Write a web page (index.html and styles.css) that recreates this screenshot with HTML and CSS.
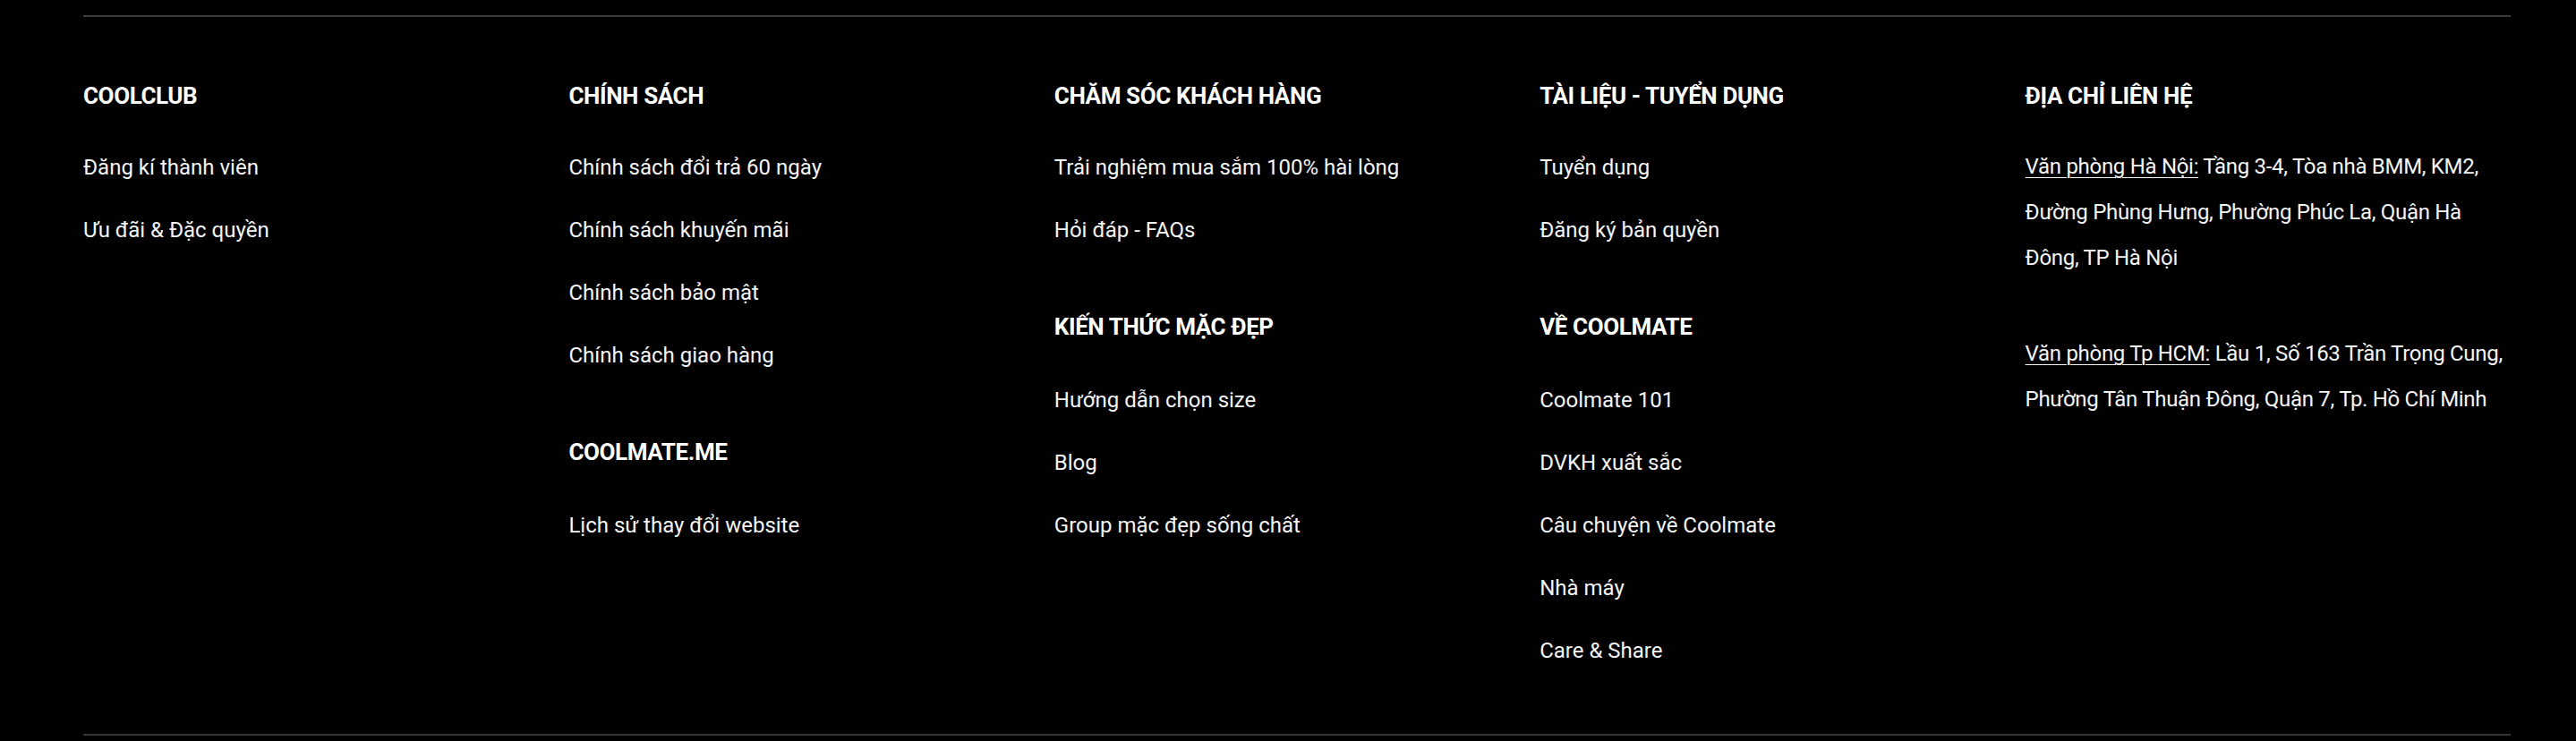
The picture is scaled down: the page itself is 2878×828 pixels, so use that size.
FILE: index.html
```html
<!DOCTYPE html>
<html lang="vi">
<head>
<meta charset="utf-8">
<title>Coolmate footer</title>
<link rel="stylesheet" href="styles.css">
</head>
<body>
<footer class="footer">
  <div class="footer-inner">
    <div class="col">
      <section class="group">
        <h3 class="heading">COOLCLUB</h3>
        <ul class="links">
          <li><a href="#">Đăng kí thành viên</a></li>
          <li><a href="#">Ưu đãi &amp; Đặc quyền</a></li>
        </ul>
      </section>
    </div>
    <div class="col">
      <section class="group">
        <h3 class="heading">CHÍNH SÁCH</h3>
        <ul class="links">
          <li><a href="#">Chính sách đổi trả 60 ngày</a></li>
          <li><a href="#">Chính sách khuyến mãi</a></li>
          <li><a href="#">Chính sách bảo mật</a></li>
          <li><a href="#">Chính sách giao hàng</a></li>
        </ul>
      </section>
      <section class="group">
        <h3 class="heading">COOLMATE.ME</h3>
        <ul class="links">
          <li><a href="#">Lịch sử thay đổi website</a></li>
        </ul>
      </section>
    </div>
    <div class="col">
      <section class="group">
        <h3 class="heading">CHĂM SÓC KHÁCH HÀNG</h3>
        <ul class="links">
          <li><a href="#">Trải nghiệm mua sắm 100% hài lòng</a></li>
          <li><a href="#">Hỏi đáp - FAQs</a></li>
        </ul>
      </section>
      <section class="group">
        <h3 class="heading">KIẾN THỨC MẶC ĐẸP</h3>
        <ul class="links">
          <li><a href="#">Hướng dẫn chọn size</a></li>
          <li><a href="#">Blog</a></li>
          <li><a href="#">Group mặc đẹp sống chất</a></li>
        </ul>
      </section>
    </div>
    <div class="col">
      <section class="group">
        <h3 class="heading">TÀI LIỆU - TUYỂN DỤNG</h3>
        <ul class="links">
          <li><a href="#">Tuyển dụng</a></li>
          <li><a href="#">Đăng ký bản quyền</a></li>
        </ul>
      </section>
      <section class="group">
        <h3 class="heading">VỀ COOLMATE</h3>
        <ul class="links">
          <li><a href="#">Coolmate 101</a></li>
          <li><a href="#">DVKH xuất sắc</a></li>
          <li><a href="#">Câu chuyện về Coolmate</a></li>
          <li><a href="#">Nhà máy</a></li>
          <li><a href="#">Care &amp; Share</a></li>
        </ul>
      </section>
    </div>
    <div class="col">
      <section class="group">
        <h3 class="heading">ĐỊA CHỈ LIÊN HỆ</h3>
        <div class="address">
          <p><span class="office">Văn phòng Hà Nội:</span> Tầng 3-4, Tòa nhà BMM, KM2, Đường Phùng Hưng, Phường Phúc La, Quận Hà Đông, TP Hà Nội</p>
          <p><span class="office">Văn phòng Tp HCM:</span> Lầu 1, Số 163 Trần Trọng Cung, Phường Tân Thuận Đông, Quận 7, Tp. Hồ Chí Minh</p>
        </div>
      </section>
    </div>
  </div>
</footer>
</body>
</html>
```

FILE: styles.css
```css
* {
  box-sizing: border-box;
}

html, body {
  margin: 0;
  padding: 0;
  background: #000;
}

body {
  font-family: Roboto, "Noto Sans", "Liberation Sans", sans-serif;
  color: #f4f4f4;
  width: 2878px;
  height: 828px;
  overflow: hidden;
}

.footer {
  padding: 17px 73px 0 93px;
}

.footer-inner {
  border-top: 2px solid #3c3c3c;
  border-bottom: 2px solid #333;
  display: grid;
  grid-template-columns: repeat(5, 1fr);
  padding: 72px 0 78px;
}

.col {
  display: flex;
  flex-direction: column;
  gap: 77px;
}

.heading {
  margin: 0;
  font-size: 26px;
  line-height: 32px;
  font-weight: 700;
  letter-spacing: -0.4px;
  color: #fff;
}

.links {
  list-style: none;
  margin: 49px 0 0;
  padding: 0;
  display: flex;
  flex-direction: column;
  gap: 40px;
}

.group + .group .links {
  margin-top: 51px;
}

.links li {
  font-size: 24px;
  line-height: 30px;
  letter-spacing: 0;
}

.links a {
  color: #f4f4f4;
  text-decoration: none;
}

.address {
  margin-top: 38px;
  font-size: 24px;
  line-height: 51px;
  letter-spacing: -0.3px;
}

.address p {
  margin: 0 0 56px;
}

.address p:last-child {
  margin-bottom: 0;
}

.office {
  text-decoration: underline;
  text-underline-offset: 4px;
  text-decoration-thickness: 1px;
}
```
